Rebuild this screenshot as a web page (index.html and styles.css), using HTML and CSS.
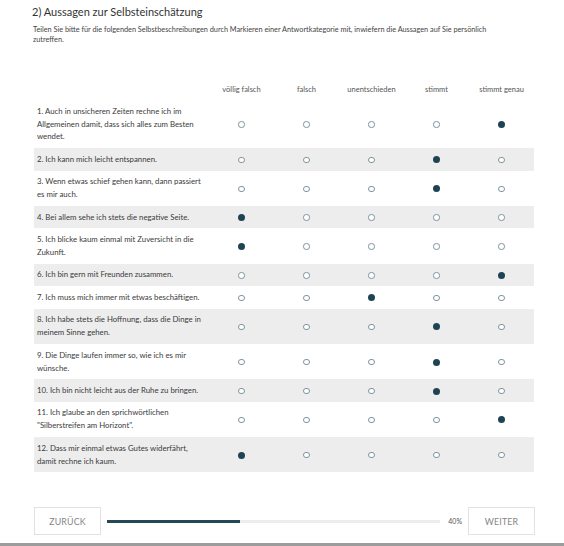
FILE: index.html
```html
<!DOCTYPE html>
<html lang="de">
<head>
<meta charset="utf-8">
<title>Aussagen zur Selbsteinschätzung</title>
<link rel="stylesheet" href="styles.css">
</head>
<body>
<div class="page">
  <div class="content">
    <h1 class="title">2) Aussagen zur Selbsteinschätzung</h1>
    <p class="intro">Teilen Sie bitte für die folgenden Selbstbeschreibungen durch Markieren einer Antwortkategorie mit, inwiefern die Aussagen auf Sie persönlich zutreffen.</p>
    <table class="matrix">
      <colgroup><col class="c-q"><col class="c-a"><col class="c-a"><col class="c-a"><col class="c-a"><col class="c-a"></colgroup>
      <thead>
        <tr><th></th><th>völlig falsch</th><th>falsch</th><th>unentschieden</th><th>stimmt</th><th>stimmt genau</th></tr>
      </thead>
      <tbody>
        <tr><td class="q">1. Auch in unsicheren Zeiten rechne ich im Allgemeinen damit, dass sich alles zum Besten wendet.</td><td><span class="r"></span></td><td><span class="r"></span></td><td><span class="r"></span></td><td><span class="r"></span></td><td><span class="r on"></span></td></tr>
        <tr class="alt"><td class="q">2. Ich kann mich leicht entspannen.</td><td><span class="r"></span></td><td><span class="r"></span></td><td><span class="r"></span></td><td><span class="r on"></span></td><td><span class="r"></span></td></tr>
        <tr><td class="q">3. Wenn etwas schief gehen kann, dann passiert es mir auch.</td><td><span class="r"></span></td><td><span class="r"></span></td><td><span class="r"></span></td><td><span class="r on"></span></td><td><span class="r"></span></td></tr>
        <tr class="alt"><td class="q">4. Bei allem sehe ich stets die negative Seite.</td><td><span class="r on"></span></td><td><span class="r"></span></td><td><span class="r"></span></td><td><span class="r"></span></td><td><span class="r"></span></td></tr>
        <tr><td class="q">5. Ich blicke kaum einmal mit Zuversicht in die Zukunft.</td><td><span class="r on"></span></td><td><span class="r"></span></td><td><span class="r"></span></td><td><span class="r"></span></td><td><span class="r"></span></td></tr>
        <tr class="alt"><td class="q">6. Ich bin gern mit Freunden zusammen.</td><td><span class="r"></span></td><td><span class="r"></span></td><td><span class="r"></span></td><td><span class="r"></span></td><td><span class="r on"></span></td></tr>
        <tr><td class="q">7. Ich muss mich immer mit etwas beschäftigen.</td><td><span class="r"></span></td><td><span class="r"></span></td><td><span class="r on"></span></td><td><span class="r"></span></td><td><span class="r"></span></td></tr>
        <tr class="alt"><td class="q">8. Ich habe stets die Hoffnung, dass die Dinge in meinem Sinne gehen.</td><td><span class="r"></span></td><td><span class="r"></span></td><td><span class="r"></span></td><td><span class="r on"></span></td><td><span class="r"></span></td></tr>
        <tr><td class="q">9. Die Dinge laufen immer so, wie ich es mir wünsche.</td><td><span class="r"></span></td><td><span class="r"></span></td><td><span class="r"></span></td><td><span class="r on"></span></td><td><span class="r"></span></td></tr>
        <tr class="alt"><td class="q">10. Ich bin nicht leicht aus der Ruhe zu bringen.</td><td><span class="r"></span></td><td><span class="r"></span></td><td><span class="r"></span></td><td><span class="r on"></span></td><td><span class="r"></span></td></tr>
        <tr><td class="q">11. Ich glaube an den sprichwörtlichen "Silberstreifen am Horizont".</td><td><span class="r"></span></td><td><span class="r"></span></td><td><span class="r"></span></td><td><span class="r"></span></td><td><span class="r on"></span></td></tr>
        <tr class="alt"><td class="q">12. Dass mir einmal etwas Gutes widerfährt, damit rechne ich kaum.</td><td><span class="r on"></span></td><td><span class="r"></span></td><td><span class="r"></span></td><td><span class="r"></span></td><td><span class="r"></span></td></tr>
      </tbody>
    </table>
    <div class="nav">
      <button class="btn">ZURÜCK</button>
      <div class="track"><div class="fill" style="width:40%"></div></div>
      <span class="pct">40%</span>
      <button class="btn">WEITER</button>
    </div>
  </div>
</div>
</body>
</html>
```

FILE: styles.css
```css
* { box-sizing: border-box; }
html, body { margin: 0; padding: 0; background: #fff; }
body { font-family: Lato, "Open Sans", sans-serif; color: #3c3c3c; }
.page {
  height: 546px;
  border-bottom: 3px solid #9c9c9c;
  overflow: hidden;
}
.content { padding: 5px 29px 0 33px; }
.title {
  margin: 0 0 0 -1px;
  font-size: 11px;
  line-height: 14px;
  font-weight: normal;
  color: #333;
}
.intro {
  margin: 6px 0 0 0;
  max-width: 462px;
  font-size: 7.3px;
  line-height: 9.5px;
  color: #444;
}
.matrix {
  margin: 35px 0 0 1px;
  width: 500px;
  border-collapse: collapse;
  table-layout: fixed;
}
.c-q { width: 175px; }
.c-a { width: 65px; }
.matrix th {
  height: 21px;
  padding: 0;
  font-size: 7.5px;
  font-weight: normal;
  color: #555;
  text-align: center;
  vertical-align: middle;
}
.matrix td {
  padding: 4.85px 0;
  font-size: 7.8px;
  line-height: 12.8px;
  text-align: center;
  vertical-align: middle;
}
.matrix td.q {
  text-align: left;
  padding: 4.85px 4px 4.85px 3px;
  color: #3a3a3a;
}
.matrix tr.alt td { background: #ededed; }
.r {
  display: inline-block;
  width: 6.5px;
  height: 6.5px;
  border: 1.3px solid #7f949d;
  border-radius: 50%;
  background: #fff;
  vertical-align: middle;
}
.r.on {
  width: 7px;
  height: 7px;
  border: none;
  background: #1e4352;
}
.nav {
  margin: 35px 0 0 1px;
  width: 501px;
  display: flex;
  align-items: center;
}
.btn {
  width: 67px;
  height: 28px;
  padding: 0;
  border: 1px solid #e2e2e2;
  background: #fff;
  font-family: Lato, "Open Sans", sans-serif;
  font-size: 8.8px;
  letter-spacing: 0.2px;
  color: #858585;
}
.track {
  flex: 1;
  height: 3px;
  margin: 0 8px 0 6px;
  background: #ededed;
}
.fill { height: 100%; background: #264856; }
.pct {
  font-size: 7px;
  color: #555;
  margin-right: 6px;
}
```
